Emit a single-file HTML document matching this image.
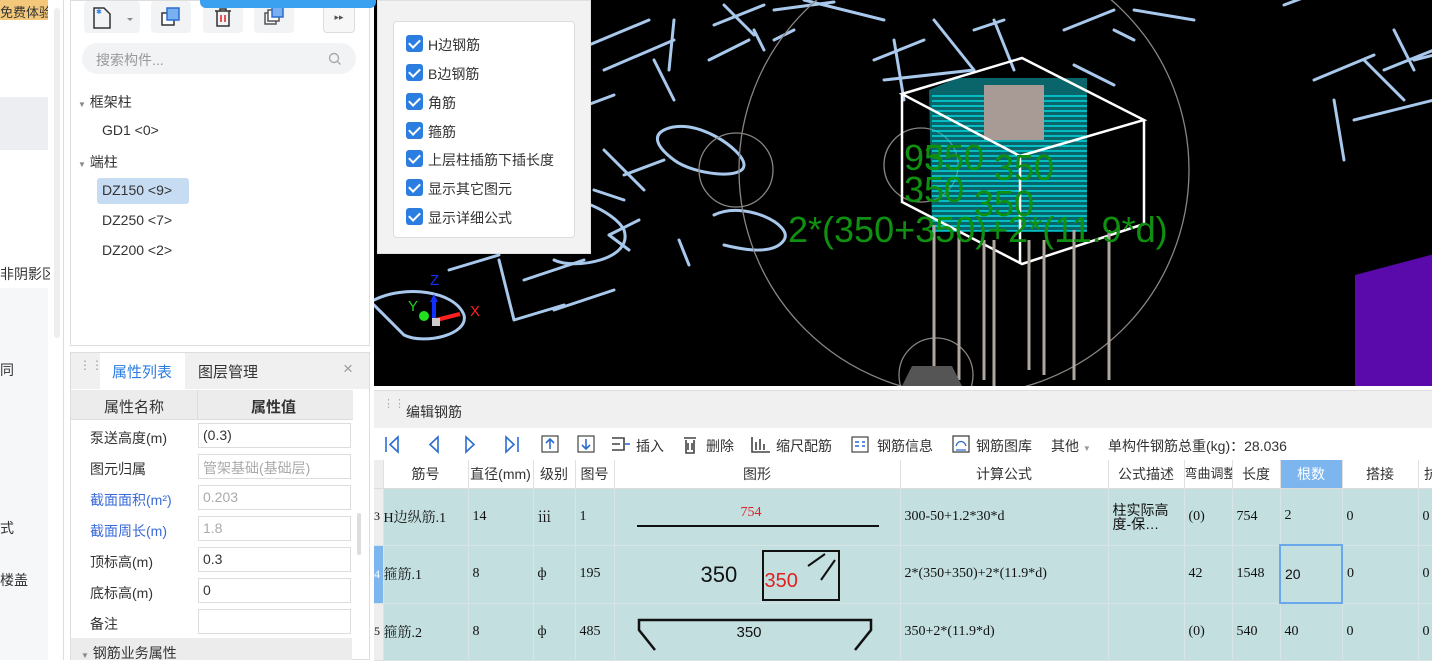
<!DOCTYPE html>
<html><head><meta charset="utf-8"><style>
*{box-sizing:border-box;margin:0;padding:0}
body{width:1432px;height:660px;overflow:hidden;position:relative;background:#fff;font-family:"Liberation Sans","Noto Sans CJK SC",sans-serif;font-size:14px;color:#333}
.abs{position:absolute;white-space:nowrap}
.cb{position:absolute;left:12px;width:17px;height:17px;background:#2b7de0;border-radius:3px}
.cb:after{content:"";position:absolute;left:5px;top:2px;width:5px;height:9px;border:solid #fff;border-width:0 2px 2px 0;transform:rotate(45deg)}
.cbl{position:absolute;left:34px;font-size:14px;color:#333}
table{border-collapse:collapse;table-layout:fixed}
.in{border:1px solid #ddd;height:25px;padding:3px 4px;background:#fff}
.grid td{border-right:1px solid #d8e4e6;border-bottom:1px solid #d8e4e6;font-family:"Liberation Serif","Noto Serif CJK SC",serif;font-size:14px;padding-left:4px;color:#111;white-space:nowrap;overflow:hidden}
.grid th{font-weight:normal;font-size:14px;color:#333;border-right:1px solid #e0e0e0;border-bottom:1px solid #ddd;height:28px;background:#fff}
.tb{position:absolute;top:436px;font-size:14px;color:#333}
</style></head><body>
<div class="abs" style="left:0;top:0;width:50px;height:660px;background:#fff;overflow:hidden"></div>
<div class="abs" style="left:0;top:0;width:48px;height:20px;background:#f4c87a;font-size:13px;color:#333;padding-top:2px;overflow:hidden">免费体验</div>
<div class="abs" style="left:0;top:97px;width:48px;height:53px;background:#eceef2"></div>
<div class="abs" style="left:0;top:288px;width:48px;height:372px;background:#f6f7f9"></div>
<div class="abs" style="left:0;top:264px;width:50px;overflow:hidden;font-size:14px">非阴影区.</div>
<div class="abs" style="left:0;top:360px;font-size:14px">同</div>
<div class="abs" style="left:0;top:518px;font-size:14px">式</div>
<div class="abs" style="left:0;top:570px;font-size:14px">楼盖</div>
<div class="abs" style="left:54px;top:8px;width:6px;height:330px;background:#eee;border-radius:3px"></div>
<div class="abs" style="left:63px;top:0;width:1px;height:660px;background:#ddd"></div>
<div class="abs" style="left:70px;top:0;width:300px;height:346px;border:1px solid #ddd;background:#fff"></div>
<div class="abs" style="left:84px;top:1px;width:56px;height:32px;background:#f2f3f5;border-radius:4px"></div>
<svg class="abs" style="left:92px;top:6px" width="44" height="24"><path d="M2 2h10l6 6v14H2z" fill="none" stroke="#333" stroke-width="1.5"/><text x="4" y="8" font-size="7" fill="#2b7de0">✱</text><path d="M35 12l3 3 3-3" fill="#888"/></svg>
<div class="abs" style="left:151px;top:1px;width:40px;height:32px;background:#f2f3f5;border-radius:4px"></div>
<svg class="abs" style="left:160px;top:6px" width="22" height="22"><rect x="2" y="7" width="12" height="12" fill="#fff" stroke="#333" stroke-width="1.5"/><rect x="7" y="2" width="12" height="12" fill="#7ab0f0" stroke="#2b6cd0" stroke-width="1.5"/></svg>
<div class="abs" style="left:203px;top:1px;width:40px;height:32px;background:#f2f3f5;border-radius:4px"></div>
<svg class="abs" style="left:212px;top:6px" width="22" height="22"><path d="M3 5h16M8 5V3h6v2M5 5v15h12V5" fill="none" stroke="#333" stroke-width="1.5"/><path d="M9 9v7M13 9v7" stroke="#e02020" stroke-width="1.5"/></svg>
<div class="abs" style="left:254px;top:1px;width:40px;height:32px;background:#f2f3f5;border-radius:4px"></div>
<svg class="abs" style="left:263px;top:4px" width="24" height="24"><rect x="2" y="9" width="11" height="11" fill="none" stroke="#555" stroke-width="1.5"/><rect x="5" y="6" width="11" height="11" fill="#fff" stroke="#555" stroke-width="1.5"/><rect x="9" y="2" width="11" height="11" fill="#7ab0f0" stroke="#2b6cd0" stroke-width="1.5"/></svg>
<div class="abs" style="left:323px;top:1px;width:32px;height:32px;border:1px solid #ddd;border-radius:4px;background:#f7f7f7;font-size:9px;text-align:center;line-height:30px;color:#555">▸▸</div>
<div class="abs" style="left:82px;top:43px;width:274px;height:31px;background:#f2f3f5;border-radius:16px;font-size:14px;color:#999;padding:7px 14px">搜索构件...</div>
<svg class="abs" style="left:328px;top:52px" width="14" height="14"><circle cx="6" cy="6" r="4.5" fill="none" stroke="#aaa" stroke-width="1.4"/><path d="M9.5 9.5l3 3" stroke="#aaa" stroke-width="1.4"/></svg>
<div class="abs" style="left:78px;top:92px;font-size:14px"><span style="font-size:8px;color:#888">▼</span> 框架柱</div>
<div class="abs" style="left:102px;top:122px;font-size:14px">GD1 &lt;0&gt;</div>
<div class="abs" style="left:78px;top:152px;font-size:14px"><span style="font-size:8px;color:#888">▼</span> 端柱</div>
<div class="abs" style="left:97px;top:178px;width:92px;height:26px;background:#c6dcf2;border-radius:3px"></div>
<div class="abs" style="left:102px;top:182px;font-size:14px">DZ150 &lt;9&gt;</div>
<div class="abs" style="left:102px;top:212px;font-size:14px">DZ250 &lt;7&gt;</div>
<div class="abs" style="left:102px;top:242px;font-size:14px">DZ200 &lt;2&gt;</div>
<div class="abs" style="left:70px;top:352px;width:300px;height:308px;border:1px solid #ddd;background:#fff"></div>
<div class="abs" style="left:71px;top:353px;width:298px;height:36px;background:#f0f0f0"></div>
<div class="abs" style="left:79px;top:362px;color:#999;font-size:12px;line-height:6px">⋮⋮</div>
<div class="abs" style="left:100px;top:353px;width:85px;height:36px;background:#fff;color:#2b7de0;font-size:15px;padding:8px 12px">属性列表</div>
<div class="abs" style="left:198px;top:361px;font-size:15px">图层管理</div>
<div class="abs" style="left:343px;top:359px;font-size:17px;color:#999">×</div>
<div class="abs" style="left:71px;top:390px;width:282px;height:30px;background:#ececec;border-bottom:1px solid #ddd"></div>
<div class="abs" style="left:197px;top:390px;width:1px;height:30px;background:#ddd"></div>
<div class="abs" style="left:104px;top:396px;font-size:15px">属性名称</div>
<div class="abs" style="left:251px;top:396px;font-size:15px;font-weight:bold">属性值</div>
<div class="abs" style="left:90px;top:428px;font-size:14px">泵送高度(m)</div><div class="abs in" style="left:198px;top:423px;width:153px">(0.3)</div>
<div class="abs" style="left:90px;top:459px;font-size:14px">图元归属</div><div class="abs in" style="left:198px;top:454px;width:153px;color:#aaa">管架基础(基础层)</div>
<div class="abs" style="left:90px;top:490px;font-size:14px;color:#3a6ad8">截面面积(m²)</div><div class="abs in" style="left:198px;top:485px;width:153px;color:#aaa">0.203</div>
<div class="abs" style="left:90px;top:521px;font-size:14px;color:#3a6ad8">截面周长(m)</div><div class="abs in" style="left:198px;top:516px;width:153px;color:#aaa">1.8</div>
<div class="abs" style="left:90px;top:552px;font-size:14px">顶标高(m)</div><div class="abs in" style="left:198px;top:547px;width:153px">0.3</div>
<div class="abs" style="left:90px;top:583px;font-size:14px">底标高(m)</div><div class="abs in" style="left:198px;top:578px;width:153px">0</div>
<div class="abs" style="left:90px;top:614px;font-size:14px">备注</div><div class="abs in" style="left:198px;top:609px;width:153px"></div>
<div class="abs" style="left:71px;top:638px;width:281px;height:22px;background:#ececec;padding:5px 10px;font-size:14px"><span style="font-size:8px;color:#888">▼</span> 钢筋业务属性</div>
<div class="abs" style="left:357px;top:513px;width:4px;height:42px;background:#ddd;border-radius:2px"></div>
<div class="abs" style="left:374px;top:0;width:1058px;height:386px;background:#000;overflow:hidden">
<svg width="1058" height="386" style="position:absolute;left:0;top:0" fill="none">
<g stroke="#a8c8ec" stroke-width="3" stroke-linecap="round">
<path d="M215 45l60-25M230 70l70-30M200 110l40-15M280 60l20 40M300 20l-5 50M340 25l50-20M335 60l40-20M350 5l30 30M380 30l10 20"/>
<path d="M400 10l60 -8M420 30l-20 10M430 0l80 20"/>
<path d="M500 60l50-20M520 40l10 60M510 80l90-10M560 20l40 50M600 30l30-10M620 20l20 50"/>
<path d="M690 30l50-20M700 65l40 20M740 30l20 10M760 10l60 10"/>
<path d="M910 5l40-15M940 80l60-25M960 100l10 60M980 120l80-20M990 60l40 40M1010 70l50-20M1020 30l20 40M1040 60l20-5"/>
<path d="M250 175l40-15M230 150l40 40M250 200l-30-10"/>
<path d="M170 200c20-10 70 10 80 30c10 30-50 40-70 30"/>
<path d="M290 130c30-15 80 20 80 35c0 15-50 10-70-5c-20-15-20-25-10-30z"/>
<path d="M340 215c30-15 80 10 70 25c-10 15-40 10-60 5"/>
<path d="M265 220l-30 15M235 235l20 15M305 240l10 25"/>
<path d="M150 280l60-20M180 310l60-20M75 270l50-15M125 260l15 60M140 320l50-15"/>
<path d="M0 300c30-15 80-10 90 15c5 20-40 30-60 20l-30-30"/>
</g>
<g stroke="#8a8580" stroke-width="1.3"><circle cx="590" cy="170" r="225"/><circle cx="362" cy="170" r="37"/><circle cx="547" cy="165" r="37"/><circle cx="562" cy="375" r="37"/></g>
<path d="M555 90l28-12h130v153h-155z" fill="#10a8b0" opacity="0.6"/>
<g stroke="#00f0f8" stroke-width="1.3">
<path d="M558 96h155M558 101h155M558 106h155M558 111h155M558 116h155M558 121h155M558 126h155M558 131h155M558 136h155M558 141h155M558 146h155M558 151h155M558 156h155M558 161h155M558 166h155M558 171h155M558 176h155M558 181h155M558 186h155M558 191h155M558 196h155M558 201h155M558 206h155M558 211h155M558 216h155M558 221h155M558 226h155M558 231h155"/>
</g>
<path d="M610 85h60v55h-60z" fill="#a89a94"/>
<g stroke="#fff" stroke-width="2.5"><path d="M528 94l120-36 122 62-124 36zM528 94v108l120 62 122-40V120M646 156v108"/></g>
<g stroke="#b0a8a0" stroke-width="3"><path d="M560 225v145M585 230v150M610 240v140M620 240v150M655 240v130M670 240v135M700 230v150M735 230v150"/></g>
<path d="M981 275l87-23v134h-87z" fill="#5a0aaa"/>
<path d="M528 386l10-20h40l10 20z" fill="#555"/>
<g>
<path d="M60 300v20" stroke="#1030ff" stroke-width="4"/><path d="M56 302l4-8 4 8z" fill="#1030ff"/>
<path d="M62 320l24-6" stroke="#ff2020" stroke-width="4"/><circle cx="50" cy="316" r="5" fill="#20e020"/><rect x="58" y="318" width="8" height="8" fill="#ccc"/>
</g>
</svg>
<div class="abs" style="left:56px;top:272px;color:#1030ff;font-size:15px">Z</div>
<div class="abs" style="left:34px;top:298px;color:#20d020;font-size:15px">Y</div>
<div class="abs" style="left:96px;top:303px;color:#ff2020;font-size:15px">X</div>
<div class="abs" style="left:530px;top:140px;color:#109010;font-size:36px;line-height:36px">95</div>
<div class="abs" style="left:550px;top:140px;color:#109010;font-size:36px;line-height:36px">350</div>
<div class="abs" style="left:620px;top:150px;color:#109010;font-size:36px;line-height:36px">350</div>
<div class="abs" style="left:530px;top:172px;color:#109010;font-size:36px;line-height:36px">350</div>
<div class="abs" style="left:600px;top:186px;color:#109010;font-size:36px;line-height:36px">350</div>
<div class="abs" style="left:414px;top:212px;color:#109010;font-size:36px;line-height:36px">2*(350+350)+2*(11.9*d)</div>
</div>
<div class="abs" style="left:200px;top:0;width:176px;height:8px;background:#3aa0f0;border-radius:0 0 6px 6px"></div>
<div class="abs" style="left:377px;top:0;width:214px;height:254px;background:#f2f2f2;border:1px solid #e0e0e0"></div>
<div class="abs" style="left:393px;top:21px;width:182px;height:217px;background:#fff;border:1px solid #ddd;border-radius:4px">
<div class="cb" style="top:13px"></div><div class="cbl" style="top:13px">H边钢筋</div>
<div class="cb" style="top:42px"></div><div class="cbl" style="top:42px">B边钢筋</div>
<div class="cb" style="top:71px"></div><div class="cbl" style="top:71px">角筋</div>
<div class="cb" style="top:100px"></div><div class="cbl" style="top:100px">箍筋</div>
<div class="cb" style="top:128px"></div><div class="cbl" style="top:128px">上层柱插筋下插长度</div>
<div class="cb" style="top:157px"></div><div class="cbl" style="top:157px">显示其它图元</div>
<div class="cb" style="top:186px"></div><div class="cbl" style="top:186px">显示详细公式</div>
</div>
<div class="abs" style="left:374px;top:390px;width:1058px;height:38px;background:#f0f0f0;border-top:1px solid #ddd"></div>
<div class="abs" style="left:383px;top:401px;color:#aaa;font-size:11px;line-height:6px">⋮⋮</div>
<div class="abs" style="left:406px;top:402px;font-size:14px">编辑钢筋</div>
<div class="abs" style="left:374px;top:428px;width:1058px;height:32px;background:#fff"></div>
<svg class="abs" style="left:382px;top:434px" width="520" height="22" fill="none" stroke="#2b6cd0" stroke-width="1.6">
<path d="M4 3v15M16 3l-8 7.5 8 7.5z"/><path d="M56 3l-8 7.5 8 7.5z"/><path d="M84 3l8 7.5-8 7.5z"/><path d="M124 3l8 7.5-8 7.5zM136 3v15"/>
<rect x="160" y="2" width="16" height="16" stroke="#444" stroke-width="1.2"/><path d="M168 15V6M164 9l4-4 4 4"/>
<rect x="196" y="2" width="16" height="16" stroke="#444" stroke-width="1.2"/><path d="M204 5v9M200 11l4 4 4-4"/>
<path d="M230 4h12v12h-12M230 10h8" stroke="#444"/><path d="M243 10h5" stroke="#2b6cd0"/>
<path d="M302 4h12M304 6v13h8V6M306 9v7M310 9v7" stroke="#444"/>
<path d="M370 3v15h18M374 8v8M378 5v11M382 10v6" stroke="#444"/>
<rect x="470" y="3" width="16" height="15" stroke="#444" stroke-width="1.2"/><path d="M473 8h4M473 12h4M480 8h3M480 12h3"/>
</svg>
<div class="tb" style="left:636px">插入</div>
<div class="tb" style="left:706px">删除</div>
<div class="tb" style="left:776px">缩尺配筋</div>
<svg class="abs" style="left:951px;top:434px" width="20" height="22" fill="none" stroke="#444" stroke-width="1.3"><rect x="2" y="2" width="16" height="16"/><path d="M5 12c2-6 8-6 10 0M5 16h10" stroke="#2b6cd0"/></svg>
<div class="tb" style="left:877px">钢筋信息</div>
<div class="tb" style="left:976px">钢筋图库</div>
<div class="tb" style="left:1051px">其他 <span style="font-size:8px;color:#999">▼</span></div>
<div class="tb" style="left:1108px">单构件钢筋总重(kg)：28.036</div>
<div class="abs" style="left:374px;top:460px;width:1058px;height:200px;background:#c3dfe0"></div>
<table class="grid abs" style="left:374px;top:460px;width:1070px">
<colgroup><col style="width:9px"><col style="width:85px"><col style="width:65px"><col style="width:42px"><col style="width:39px"><col style="width:286px"><col style="width:208px"><col style="width:76px"><col style="width:48px"><col style="width:48px"><col style="width:62px"><col style="width:76px"><col style="width:26px"></colgroup>
<tr><th style="background:#eee"></th><th>筋号</th><th>直径(mm)</th><th>级别</th><th>图号</th><th>图形</th><th>计算公式</th><th>公式描述</th><th style="font-size:13px;line-height:12px;overflow:hidden">弯曲调整</th><th>长度</th><th style="background:#7db6ee;color:#fff">根数</th><th>搭接</th><th>抗</th></tr>
<tr style="height:57px"><td style="background:#eee;padding:0;font-size:12px">3</td><td style="padding-left:0">H边纵筋.1</td><td>14</td><td>ⅲ</td><td>1</td><td style="position:relative"><div class="abs" style="left:126px;top:16px;color:#e02020">754</div><div class="abs" style="left:22px;top:36px;width:242px;height:2px;background:#111"></div></td><td>300-50+1.2*30*d</td><td style="font-family:'Liberation Sans','Noto Sans CJK SC',sans-serif;line-height:14px;white-space:normal">柱实际高度-保…</td><td>(0)</td><td>754</td><td>2</td><td>0</td><td>0</td></tr>
<tr style="height:58px"><td style="background:#7db6ee;padding:0;font-size:12px;color:#fff">4</td><td style="padding-left:0">箍筋.1</td><td>8</td><td>ф</td><td>195</td><td style="position:relative"><div class="abs" style="left:86px;top:16px;font-family:'Liberation Sans',sans-serif;font-size:22px">350</div><div class="abs" style="left:147px;top:4px;width:78px;height:51px;border:2px solid #111"></div><div class="abs" style="left:150px;top:24px;font-family:'Liberation Sans',sans-serif;font-size:20px;color:#e02020">350</div><svg class="abs" style="left:190px;top:6px" width="34" height="30"><path d="M3 14L20 2M16 28L30 8" stroke="#111" stroke-width="2"/></svg></td><td>2*(350+350)+2*(11.9*d)</td><td></td><td>42</td><td>1548</td><td style="border:2px solid #6aa8ea;font-family:'Liberation Sans',sans-serif">20</td><td>0</td><td>0</td></tr>
<tr style="height:57px"><td style="background:#eee;padding:0;font-size:12px">5</td><td style="padding-left:0">箍筋.2</td><td>8</td><td>ф</td><td>485</td><td style="position:relative"><svg class="abs" style="left:18px;top:10px" width="250" height="40"><path d="M22 36L6 16V6h232v10L222 36" fill="none" stroke="#111" stroke-width="2.5"/></svg><div class="abs" style="left:122px;top:20px;font-family:'Liberation Sans',sans-serif;font-size:15px">350</div></td><td>350+2*(11.9*d)</td><td></td><td>(0)</td><td>540</td><td>40</td><td>0</td><td>0</td></tr>
</table>
</body></html>
